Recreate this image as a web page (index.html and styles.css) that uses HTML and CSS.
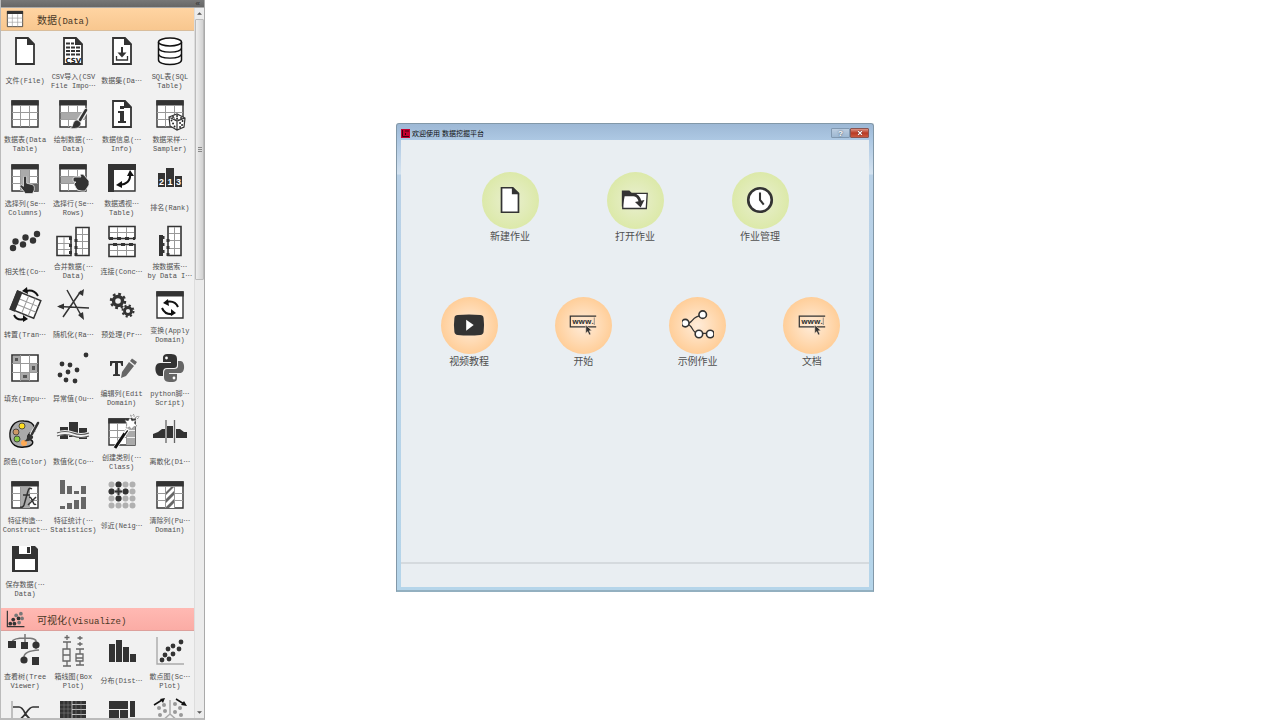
FILE: index.html
```html
<!DOCTYPE html>
<html lang="zh-CN">
<head>
<meta charset="utf-8">
<title>数据挖掘平台</title>
<link rel="stylesheet" href="styles.css">
</head>
<body>
<svg class="defs" aria-hidden="true">
  <defs>
    <symbol id="table" viewBox="0 0 34 34"><path fill="#fff" stroke="#333" stroke-width="1.4" d="M4 4h26v26H4z"/><path stroke="#999" d="M12.500 9v21M21.500 9v21M4 15.500h26M4 22.500h26"/><path fill="#333" d="M3.300 3.300h27.400v5.200H3.300z"/></symbol>
    <symbol id="page" viewBox="0 0 34 34"><path fill="#fff" stroke="#333" stroke-width="1.800" d="M8 4h12l6 6v20H8z"/><path fill="#333" d="M19 3l8 8h-8z"/></symbol>
    <symbol id="frame" viewBox="0 0 34 34"><path fill="#fff" stroke="#333" stroke-width="1.400" d="M4 4h26v26H4z"/><path fill="#333" d="M3.300 3.300h27.400v5.200H3.300z"/></symbol>
    <symbol id="hand" viewBox="0 0 20 20"><path fill="#333" stroke="#f1f1f1" stroke-width=".8" d="M5 2q0-2 1.700-2t1.800 2v6l6 1.500q2.500.5 2.500 3v3l-2 4H7l-2-3-4-5q0-2 2-1.500l2 1.500z"/></symbol>
    <symbol id="www" viewBox="0 0 34 34"><path fill="none" stroke="#333" stroke-width="1.300" d="M31 7.500H3.500v11.500H31"/><path stroke="#777" stroke-width=".8" d="M29 9v8"/><text x="5.500" y="16" class="www-text">www.</text><path fill="#333" stroke="#ffe3c6" stroke-width=".6" d="M20 17l6.500 6-2.800.2 1.700 3.600-1.800.9-1.700-3.700-2 2z"/></symbol>
  </defs>
</svg>

<aside class="palette">
  <div class="palette-bar"><button class="collapse" aria-label="收起">«</button></div>
  <div class="palette-main">
    <div class="sections">
      <section>
        <h2 class="head data"><svg class="head-icon"><use href="#table"/></svg><span>数据<small>(Data)</small></span></h2>
        <div class="grid">
          <button class="item"><svg><use href="#page"/></svg><span>文件(File)</span></button>
          <button class="item"><svg viewBox="0 0 34 34"><use href="#page"/><path stroke="#333" stroke-width="2" stroke-dasharray="4 1" d="M10 9.500h8M10 13.500h14M10 17h14M10 20.500h14"/><text x="9.500" y="28.500" class="csv-text">CSV</text></svg><span>CSV导入(CSV<br>File Impo⋯</span></button>
          <button class="item"><svg viewBox="0 0 34 34"><use href="#page"/><path fill="none" stroke="#333" stroke-width="2" d="M17 13v8"/><path fill="#333" d="M12.500 18.500h9L17 23.500z"/><path fill="none" stroke="#333" stroke-width="1.300" d="M11.500 22v4h11v-4"/></svg><span>数据集(Da⋯</span></button>
          <button class="item"><svg viewBox="0 0 34 34"><path fill="#fff" stroke="#111" stroke-width="1.500" d="M5.500 8v18c0 6 23 6 23 0V8"/><ellipse cx="17" cy="8" rx="11.500" ry="4" fill="#fff" stroke="#111" stroke-width="1.500"/><path fill="none" stroke="#111" stroke-width="1.300" d="M5.500 14c0 5.500 23 5.500 23 0M5.500 20c0 5.500 23 5.500 23 0"/></svg><span>SQL表(SQL<br>Table)</span></button>

          <button class="item"><svg><use href="#table"/></svg><span>数据表(Data<br>Table)</span></button>
          <button class="item"><svg viewBox="0 0 34 34"><use href="#table"/><path fill="#aaa" d="M5 15.500h24v7H5z"/><path stroke="#f1f1f1" stroke-width="5" d="M31 12l-8 12"/><path stroke="#333" stroke-width="2.600" stroke-linecap="round" d="M30 13l-6 10"/><path fill="#333" stroke="#f1f1f1" stroke-width=".6" d="M21 23q4 1 4 4-2 6-11 4 3-1 3-4 1-4 4-4z"/></svg><span>绘制数据(⋯<br>Data)</span></button>
          <button class="item"><svg viewBox="0 0 34 34"><use href="#page"/><path fill="#333" d="M15 9h4v3h-4zM13 14h6v10h2v2h-8v-2h2v-8h-2z"/></svg><span>数据信息(⋯<br>Info)</span></button>
          <button class="item"><svg viewBox="0 0 34 34"><use href="#table"/><path fill="#fff" stroke="#333" stroke-width="1.200" d="M16 20l8-3 8 4-1 9-7 3-7-4zM16 20l8 4 8-3M24 24v9"/><path stroke="#222" stroke-width="1.800" stroke-linecap="round" d="M20 20h.1M24 19h.1M28 21h.1M24 21.500h.1M18.500 23.500h.1M21.500 29.500h.1M20 26.500h.1M27 26h.1M29 28h.1M27 30h.1M29.500 24h.1"/></svg><span>数据采样⋯<br>Sampler)</span></button>

          <button class="item"><svg viewBox="0 0 34 34"><use href="#table"/><path fill="#aaa" d="M13 9h8v21h-8z"/><path fill="#666" d="M23 23h7v7h-7z"/><use href="#hand" x="11" y="15" width="18" height="18"/></svg><span>选择列(Se⋯<br>Columns)</span></button>
          <button class="item"><svg viewBox="0 0 34 34"><use href="#table"/><path fill="#aaa" d="M5 16h24v6H5z"/><path fill="#333" stroke="#f1f1f1" stroke-width=".8" d="M17 18q0-2 2-2h6l-1-2q2-2 4 0l5 6v4l-4 6h-3q-5 0-6-3l-2-4 2-2h-2q-1-1-1-3z"/></svg><span>选择行(Se⋯<br>Rows)</span></button>
          <button class="item"><svg viewBox="0 0 34 34"><path fill="#fff" stroke="#333" stroke-width="1.400" d="M4 4h26v26H4z"/><path fill="#333" d="M3 3h28v6H9v22H3z"/><path fill="none" stroke="#111" stroke-width="2" d="M25 13q1 10-11 11"/><path fill="#111" d="M25 9l4 6h-7zM11 24l6-4v7z"/></svg><span>数据透视⋯<br>Table)</span></button>
          <button class="item"><svg viewBox="0 0 34 34"><path fill="#333" d="M5 12h7v14H5zM13 7h8v19h-8zM22 15h7v11h-7z"/><text x="6" y="24" class="rank-text">2</text><text x="14.500" y="24" class="rank-text">1</text><text x="23" y="24" class="rank-text">3</text></svg><span>排名(Rank)</span></button>

          <button class="item"><svg viewBox="0 0 34 34"><g fill="#333"><circle cx="5" cy="24" r="3.200"/><circle cx="7.500" cy="17.500" r="3.200"/><circle cx="15" cy="20.500" r="3.200"/><circle cx="17.500" cy="13.500" r="3.200"/><circle cx="25" cy="16.500" r="3.200"/><circle cx="29" cy="10" r="3.200"/></g></svg><span>相关性(Co⋯</span></button>
          <button class="item"><svg viewBox="0 0 34 34"><path fill="#fff" stroke="#333" stroke-width="1.600" d="M1 12.500h14v19H1zM20 3.500h13v28H20z"/><path stroke="#999" d="M8 13v18M2 19.500h12M2 25.500h12M26.500 4v27M21 10.500h11M21 17.500h11M21 24.500h11"/><path stroke="#333" stroke-width="3" stroke-dasharray="3 4" d="M14.500 13v18M20 15v17"/></svg><span>合并数据(⋯<br>Data)</span></button>
          <button class="item"><svg viewBox="0 0 34 34"><path fill="#fff" stroke="#333" stroke-width="1.600" d="M4 2.500h26v12H4zM4 20.500h26v12H4z"/><path stroke="#999" d="M12.500 3v11M21.500 3v11M5 8.500h24M12.500 21v11M21.500 21v11M5 26.500h24"/><path stroke="#333" stroke-width="3" stroke-dasharray="4 4" d="M4 14.500h26M8 20.500h22"/></svg><span>连接(Conc⋯</span></button>
          <button class="item"><svg viewBox="0 0 34 34"><path fill="#fff" stroke="#333" stroke-width="1.600" d="M15 2.500h13v29H15z"/><path stroke="#999" d="M21.500 3v28M16 9.500h11M16 16.500h11M16 24.500h11"/><path fill="#333" d="M6 11h4v21H6z"/><path stroke="#333" stroke-width="3" stroke-dasharray="3 4" d="M10 12v20M15 15v17"/></svg><span>按数据索⋯<br>by Data I⋯</span></button>

          <button class="item"><svg viewBox="0 0 34 34"><g transform="rotate(22 17 17)"><path fill="#fff" stroke="#333" stroke-width="1.500" d="M5 7h25v19H5z"/><path stroke="#999" d="M17 7v19M24 7v19M9 13.500h21M9 19.500h21"/><path fill="#333" d="M4 6h6v21H4z"/></g><path fill="none" stroke="#111" stroke-width="2" d="M18 3q8-2 12 5M16 31Q9 33 6 27"/><path fill="#111" d="M14 3l5-4 1 7zM20 31l-5-4v7z"/></svg><span>转置(Tran⋯</span></button>
          <button class="item"><svg viewBox="0 0 34 34"><path stroke="#333" stroke-width="1.500" d="M11 2l15 27M7 29L25 3M33 20L3 18.500"/><path fill="#333" d="M28 1l-1 7-5-3zM28 32l-6-5 5-3zM1 18.500l7-3v6z"/></svg><span>随机化(Ra⋯</span></button>
          <button class="item"><svg viewBox="0 0 34 34"><g fill="none" stroke="#333"><circle cx="13" cy="13" r="4.500" stroke-width="3.400"/><circle cx="13" cy="13" r="7" stroke-width="2.500" stroke-dasharray="2.750 2.750"/><circle cx="23" cy="23" r="3.500" stroke-width="2.800"/><circle cx="23" cy="23" r="5.500" stroke-width="2" stroke-dasharray="2.160 2.160"/></g></svg><span>预处理(Pr⋯</span></button>
          <button class="item"><svg viewBox="0 0 34 34"><use href="#frame"/><path fill="none" stroke="#111" stroke-width="2" d="M13 14q9-2 12 5M9 20q3 7 11 6"/><path fill="#111" d="M10 15l5-4 1 7zM23 25l-5-4v7z"/></svg><span>变换(Apply<br>Domain)</span></button>

          <button class="item"><svg viewBox="0 0 34 34"><path fill="#fff" stroke="#333" stroke-width="1.600" d="M4 4h26v26H4z"/><path stroke="#999" d="M12.500 4v26M21.500 4v26M4 12.500h26M4 21.500h26"/><path fill="#555" stroke="#aaa" stroke-width="2" d="M6 6h5v5H6zM23 14h5v6h-5zM14 23h6v5h-6z"/></svg><span>填充(Impu⋯</span></button>
          <button class="item"><svg viewBox="0 0 34 34"><g fill="#333"><circle cx="30" cy="4" r="2.400"/><circle cx="6" cy="13" r="2.400"/><circle cx="14" cy="14" r="2.400"/><circle cx="21" cy="19" r="2.400"/><circle cx="12" cy="21" r="2.400"/><circle cx="4" cy="24" r="2.400"/><circle cx="10" cy="29" r="2.400"/><circle cx="19" cy="30" r="2.400"/></g></svg><span>异常值(Ou⋯</span></button>
          <button class="item"><svg viewBox="0 0 34 34"><path fill="#333" d="M5 10h13v5h-1.500l-1-3H13v11l2 .5V25H8v-1.500l2-.5V12H7.500l-1 3H5z"/><path fill="#666" d="M24 11l5 4-8 10-5 2 1-6zM25 10l2-2.500 5 3.500-2 3z"/></svg><span>编辑列(Edit<br>Domain)</span></button>
          <button class="item"><svg viewBox="0 0 34 34"><path fill="#333" d="M16 3c-6 0-6 2-6 5v3h8v1H7c-7 0-5 13 0 13h3v-4q0-4 4-4h7q3 0 3-3V8c0-4-2-5-8-5z"/><path fill="#666" d="M18 31c6 0 6-2 6-5v-3h-8v-1h11c6 0 5-13 0-12h-2v5q0 3-4 3h-7q-3 0-3 4v4c0 4 2 5 7 5z"/><circle cx="13.500" cy="7" r="1.400" fill="#fff"/><circle cx="21" cy="27" r="1.400" fill="#fff"/></svg><span>python脚⋯<br>Script)</span></button>

          <button class="item"><svg viewBox="0 0 34 34"><path fill="#aaa" stroke="#111" stroke-width="1.400" d="M16 6C6 5 1 13 2 22c1 8 7 11 14 10 8 0 11-5 7-7-3-2-5-3-1-7 4-2 6-1 5-4C26 9 22 6 16 6z"/><circle cx="14" cy="11" r="3" fill="#fd2" stroke="#333" stroke-width=".8"/><circle cx="8" cy="17" r="3" fill="#c96" stroke="#333" stroke-width=".8"/><circle cx="9" cy="24" r="3" fill="#8c4" stroke="#333" stroke-width=".8"/><circle cx="16" cy="28" r="3" fill="#fa5"/><path stroke="#f1f1f1" stroke-width="4" d="M30 9l-7 11"/><path stroke="#333" stroke-width="2.600" stroke-linecap="round" d="M30 8l-6 11"/><path fill="#333" d="M21 19q5 1 4 4-3 4-9 3 3-1 3-4z"/></svg><span>颜色(Color)</span></button>
          <button class="item"><svg viewBox="0 0 34 34"><path fill="#333" d="M4 12h8v12H4zM13 7h9v15h-9zM23 13h8v11h-8z"/><path fill="none" stroke="#f1f1f1" stroke-width="5" d="M1 19q8-3 16 0t16 0"/><path fill="none" stroke="#555" stroke-width="1.200" d="M1 18q8-3 16 0t16 0M1 21q8-3 16 0t16 0"/></svg><span>数值化(Co⋯</span></button>
          <button class="item"><svg viewBox="0 0 34 34"><use href="#table"/><path fill="#aaa" d="M22 9h8v21h-8z"/><path stroke="#f1f1f1" d="M22 15.500h8M22 22.500h8"/><path stroke="#fff" stroke-width="4" d="M10 33l13-19"/><path stroke="#111" stroke-width="3" d="M10 33l12-18"/><path stroke="#fff" stroke-width="1.500" d="M19 18l3-4"/><path fill="#fff" stroke="#888" stroke-width=".8" stroke-dasharray="2 1" d="M20 5l3 1 2-3 2 3 4-1-2 3 3 3-4 1-1 3-2-3-4 1 1-4zM25 0l2 1 2-2v3l2 1-3 1zM31 2l3-1-1 3z"/></svg><span>创建类别(⋯<br>Class)</span></button>
          <button class="item"><svg viewBox="0 0 34 34"><path fill="#333" d="M0 19l5-2 4-3h3v9H0zM14 11h6v12h-6zM23 14h4l4 3h3v6H23z"/><path stroke="#666" stroke-width="1.300" d="M13 5v23M21.500 5v23"/></svg><span>离散化(Di⋯</span></button>

          <button class="item"><svg viewBox="0 0 34 34"><use href="#table"/><path fill="#aaa" d="M13 9h9v21h-9z"/><path fill="none" stroke="#333" stroke-width="1.500" d="M24 11q-3-2-4 2l-4 14q-1 3-4 2M15 17h7M21 19q2 0 3 3l2 4q1 1 2 0M28 19l-8 8"/></svg><span>特征构造⋯<br>Construct⋯</span></button>
          <button class="item"><svg viewBox="0 0 34 34"><path fill="#666" d="M4 2h5v14H4zM11 8h5v8h-5zM18 13h5v3h-5zM25 8h5v8h-5zM4 28h5v3H4zM11 25h5v6h-5zM18 22h5v9h-5zM25 19h5v12h-5z"/></svg><span>特征统计(⋯<br>Statistics)</span></button>
          <button class="item"><svg viewBox="0 0 34 34"><path stroke="#b0b0b0" stroke-width="6" stroke-linecap="round" stroke-dasharray="0 7" d="M6.500 6.500h22M6.500 13.500h22M6.500 20.500h22M6.500 27.500h22"/><path stroke="#333" stroke-width="6" stroke-linecap="round" d="M13.500 6.500h.1M6.500 13.500h.1M20.500 13.500h.1M13.500 20.500h.1"/><path stroke="#333" stroke-width="2" d="M13.500 10v7M10 13.500h7"/></svg><span>邻近(Neig⋯</span></button>
          <button class="item"><svg viewBox="0 0 34 34"><use href="#table"/><path fill="#fff" d="M13 9h8v21h-8z"/><path fill="#666" d="M13 14l5-5h3l-8 8zM13 21l8-8v4l-8 8zM13 29l8-8v4l-5 5h-3z"/></svg><span>清除列(Pu⋯<br>Domain)</span></button>

          <button class="item"><svg viewBox="0 0 34 34"><path fill="#333" d="M4 4h23l3 3v23H4z"/><path fill="#fff" d="M11 4h12v8H11zM7 17h20v11H7z"/><path fill="#333" d="M19 5h3v6h-3z"/></svg><span>保存数据(⋯<br>Data)</span></button>
        </div>
      </section>
      <section>
        <h2 class="head visual"><svg class="head-icon" viewBox="0 0 34 34"><path fill="none" stroke="#333" stroke-width="2" d="M4 3v27h29"/><g fill="#333"><circle cx="9" cy="25" r="3.200"/><circle cx="16" cy="25" r="3.200"/><circle cx="14" cy="18" r="3.200"/><circle cx="23" cy="16" r="3.200"/></g><g fill="#777"><circle cx="19" cy="11" r="3.200"/><circle cx="24" cy="23" r="3.200"/><circle cx="29" cy="16" r="3.200"/><circle cx="27" cy="8" r="3.200"/></g></svg><span>可视化<small>(Visualize)</small></span></h2>
        <div class="grid">
          <button class="item"><svg viewBox="0 0 34 34"><path fill="none" stroke="#777" stroke-width="1.500" d="M4 8q1-4 13-4t11 4M17 0v10M28 8v7M16 23q0-6 15-7"/><g fill="#333"><path d="M0 7h8v7H0zM13 8h7v7h-7zM24 23h7v8h-7z"/><circle cx="28" cy="11" r="3.600"/><circle cx="16" cy="26" r="3.600"/></g></svg><span>查看树(Tree<br>Viewer)</span></button>
          <button class="item"><svg viewBox="0 0 34 34"><path fill="none" stroke="#666" stroke-width="1.300" d="M11 1v5M8.500 3.500h5M24 2v4M21.500 4h5M24 8v4M21.500 10h5M11 8v7M7 8h8M7 15h7v12H7zM7 21h7M11 27v5M7 32h8M24 15v5M20 15h8M20 20h7v7h-7zM20 24h7M24 27v4M20 31h8"/></svg><span>箱线图(Box<br>Plot)</span></button>
          <button class="item"><svg viewBox="0 0 34 34"><path fill="#333" d="M4 10h6v18H4zM11 6h6v22h-6zM18 13h6v15h-6zM25 20h6v8h-6z"/></svg><span>分布(Dist⋯</span></button>
          <button class="item"><svg viewBox="0 0 34 34"><path fill="none" stroke="#aaa" stroke-width="1.400" d="M4 3v27h27"/><g fill="#333"><circle cx="9" cy="26" r="2.400"/><circle cx="16" cy="25" r="2.400"/><circle cx="12" cy="21" r="2.400"/><circle cx="20" cy="20" r="2.400"/><circle cx="15" cy="15" r="2.400"/><circle cx="26" cy="15" r="2.400"/><circle cx="20" cy="12" r="2.400"/><circle cx="28" cy="8" r="2.400"/></g></svg><span>散点图(Sc⋯<br>Plot)</span></button>
          <button class="item" aria-label="折线图"><svg viewBox="0 0 34 34"><path stroke="#aaa" stroke-width="1.400" d="M4 4v27"/><path fill="none" stroke="#333" stroke-width="1.700" d="M5 10h6q3 0 6 6t14 12M31 10h-6q-3 0-7 6T4 28"/></svg></button>
          <button class="item" aria-label="热图"><svg viewBox="0 0 34 34"><path fill="#333" d="M4 4h26v26H4z"/><path stroke="#ddd" stroke-width=".8" d="M16 7.500h14M16 12.500h14M16 17.500h14M16 4v26"/><path stroke="#888" stroke-width=".5" d="M8 4v26M12 4v26M20 4v26M25 4v26M4 8h12M4 12h12M4 16h12"/></svg></button>
          <button class="item" aria-label="马赛克图"><svg viewBox="0 0 34 34"><path fill="#333" d="M4 4h19v8H4zM25 4h5v16h-5zM4 13h10v17H4zM15 13h8v17h-8z"/></svg></button>
          <button class="item" aria-label="投影"><svg viewBox="0 0 34 34"><path stroke="#111" stroke-width="1.500" d="M1 8l8-5M23 2l8 5"/><path fill="#111" d="M12 1l-5 1 3 4zM34 9l-6-1 3-4z"/><path stroke="#aaa" stroke-width="1.500" d="M17 3v14M17 17l-9 8M17 17l9 8"/><g fill="#999"><circle cx="11" cy="8" r="2"/><circle cx="6" cy="11" r="2"/><circle cx="12" cy="14" r="2"/><circle cx="7" cy="18" r="2"/><circle cx="22" cy="7" r="2"/><circle cx="27" cy="11" r="2"/><circle cx="22" cy="15" r="2"/><circle cx="28" cy="18" r="2"/></g></svg></button>
        </div>
      </section>
    </div>
    <div class="scroll">
      <button class="arrow" aria-label="向上滚动"><svg viewBox="0 0 6 6"><path fill="#555" d="M0 4.500l3-3 3 3z"/></svg></button>
      <div class="track"><div class="thumb"><i></i></div></div>
      <button class="arrow" aria-label="向下滚动"><svg viewBox="0 0 6 6"><path fill="#555" d="M0 1.500l3 3 3-3z"/></svg></button>
    </div>
  </div>
</aside>

<main class="stage">
  <div class="dialog" role="dialog" aria-labelledby="dialog-title">
    <header class="titlebar">
      <svg class="logo" viewBox="0 0 9 9"><path fill="#c4002f" d="M0 0h9v9H0z"/><path fill="none" stroke="#3a0010" d="M1.500 1v6.500H8M4 2h4M4.500 4v2"/></svg>
      <h1 id="dialog-title">欢迎使用 数据挖掘平台</h1>
      <button class="help" aria-label="帮助">?</button>
      <button class="close" aria-label="关闭"><svg viewBox="0 0 8 8"><path stroke="#7a2a20" stroke-width="3" d="M1.500 1.500l5 5M6.500 1.500l-5 5"/><path stroke="#fff" stroke-width="1.800" d="M1.500 1.500l5 5M6.500 1.500l-5 5"/></svg></button>
    </header>
    <div class="content">
      <div class="row three">
        <button class="action green"><span class="disc"><svg><use href="#page"/></svg></span>新建作业</button>
        <button class="action green"><span class="disc"><svg viewBox="0 0 34 34"><path fill="#fff" stroke="#333" stroke-width="1.400" d="M4 10h26l-1 16H4z"/><path fill="#333" d="M3 7h8l3 3h4v3H6L4 24H3z"/><path fill="none" stroke="#333" stroke-width="3" d="M15 11q6 1 7.500 8"/><path fill="#333" d="M17 19l10-2-4 8z"/></svg></span>打开作业</button>
        <button class="action green"><span class="disc"><svg viewBox="0 0 34 34"><circle cx="17" cy="17" r="12.500" fill="#fff" stroke="#333" stroke-width="2.800"/><path fill="none" stroke="#333" stroke-width="2.200" d="M17 9v8l4 5"/></svg></span>作业管理</button>
      </div>
      <div class="row four">
        <button class="action orange"><span class="disc"><svg viewBox="0 0 34 34"><path fill="#333" d="M5 6.500q12-1.500 24 0 3 0 3.500 3 1 7.500 0 15-.5 3-3.500 3-12 1.500-24 0-3 0-3.500-3-1-7.500 0-15 .5-3 3.500-3z"/><path fill="#fff" d="M14 11.500l8 5.500-8 6z"/></svg></span>视频教程</button>
        <button class="action orange"><span class="disc"><svg><use href="#www"/></svg></span>开始</button>
        <button class="action orange"><span class="disc"><svg viewBox="0 0 34 34"><path fill="none" stroke="#333" stroke-width="1.300" d="M4 16c8 0 6-9 17-9M4 16c9 0 5 10 14 10h11"/><g fill="#fff" stroke="#333" stroke-width="1.700"><circle cx="3.500" cy="15" r="4"/><circle cx="22" cy="6" r="4"/><circle cx="18" cy="26.500" r="4"/><circle cx="30" cy="26.500" r="4"/></g></svg></span>示例作业</button>
        <button class="action orange"><span class="disc"><svg><use href="#www"/></svg></span>文档</button>
      </div>
    </div>
    <footer class="footer"></footer>
  </div>
</main>
</body>
</html>
```
FILE: styles.css
```css
* { box-sizing: border-box; }
body {
  margin: 0;
  height: 100vh;
  overflow: hidden;
  background: #fff;
  color: #505050;
  font-family: "Liberation Mono", "Noto Sans CJK SC", monospace;
}
button { border: 0; padding: 0; background: none; color: inherit; font: inherit; }
.defs { position: absolute; width: 0; height: 0; }

.palette {
  display: flex;
  flex-direction: column;
  width: 205px;
  height: 100vh;
  background: #f1f1f1;
  border-right: 1px solid #aaa;
  border-left: 1px solid #bbb;
  border-bottom: 2px solid #bbb;
}
.palette-bar {
  flex: none;
  display: flex;
  align-items: center;
  justify-content: flex-end;
  height: 8px;
  padding-right: 4px;
  background: linear-gradient(#777, #666);
  border-bottom: 1px solid #aaa;
}
.collapse { color: #333; font-size: 8px; line-height: 6px; }
.palette-main { flex: 1; display: flex; min-height: 0; }
.sections { flex: 1; overflow: hidden; }

.head {
  display: flex;
  align-items: center;
  gap: 12px;
  height: 23px;
  margin: 0;
  padding-left: 4px;
  font-size: 10px;
  font-weight: 400;
  color: #4a3826;
  border-bottom: 1px solid #d8bd9c;
}
.head small { font-size: 9px; }
.head-icon { width: 20px; height: 20px; }
.data { background: linear-gradient(#ffd4a2, #f8c78f); }
.visual { background: linear-gradient(#ffb9b3, #fbaca5); border-color: #dda09c; }

.grid {
  display: grid;
  grid-template-columns: repeat(4, 1fr);
  grid-auto-rows: 63px 64px;
  padding-bottom: 6px;
}
.item {
  display: flex;
  flex-direction: column;
  align-items: center;
  min-width: 0;
  padding-top: 3px;
  font-size: 7px;
  line-height: 9px;
  white-space: nowrap;
}
.item svg { flex: none; width: 34px; height: 34px; overflow: visible; }
.item > span {
  display: flow-root;
  margin: auto 0;
  padding-top: 1px;
}
.csv-text { font: 700 7px "DejaVu Sans", sans-serif; fill: #222; }
.rank-text { font: 700 9px "Liberation Sans", sans-serif; fill: #fff; }
.www-text { font: 700 8px "Open Sans", sans-serif; fill: #333; }

.scroll {
  display: flex;
  flex-direction: column;
  width: 10px;
  border-left: 1px solid #ddd;
  background: #ececec;
}
.arrow { display: flex; align-items: center; justify-content: center; height: 11px; }
.arrow svg { width: 5px; height: 5px; }
.track { flex: 1; }
.thumb {
  display: flex;
  align-items: center;
  justify-content: center;
  height: 38%;
  border: 1px solid #bbb;
  border-radius: 1px;
  background: linear-gradient(90deg, #eee, #d2d2d2);
}
.thumb i { width: 4px; height: 5px; background: repeating-linear-gradient(#888 0 1px, #ddd 1px 2px); }

.stage {
  position: absolute;
  inset: 0;
  display: flex;
  align-items: center;
  justify-content: center;
  padding: 0 0 6px 1px;
  pointer-events: none;
}
.dialog {
  width: 478px;
  padding: 0 4px 3px;
  border: 1px solid #8298a8;
  border-bottom: 2px solid #93b0c0;
  border-radius: 3px 3px 0 0;
  background: linear-gradient(#9db8d5, #adc8e3 16px, #d5e3f0 50px, #b9d1e7 51px, #b5d5ea);
  pointer-events: auto;
}
.titlebar { display: flex; align-items: center; height: 16px; padding-top: 3px; gap: 2px; }
.logo { width: 9px; height: 9px; }
.titlebar h1 {
  flex: 1;
  margin: 0;
  color: #111;
  font: 400 7px "Liberation Sans", "Noto Sans CJK SC", sans-serif;
}
.help, .close {
  display: flex;
  align-items: center;
  justify-content: center;
  width: 19px;
  height: 10px;
  border: 1px solid #8198b0;
  border-radius: 1px;
  font: 700 8px "Liberation Sans", sans-serif;
}
.help { margin-right: -2px; color: #fff; background: linear-gradient(#bccde0, #9eb8d2); text-shadow: 0 0 2px #234; }
.close { border-color: #8a5450; background: linear-gradient(#dc9486, #b93a24 50%, #cb5a40); }
.close svg { width: 6px; height: 6px; }

.content {
  min-height: 424px;
  padding-top: 32px;
  background: #e9eef2;
  border-bottom: 2px solid #d5dade;
}
.row { display: grid; height: 125px; align-items: start; }
.three { grid-template-columns: repeat(3, 125px); justify-content: center; }
.four { grid-template-columns: repeat(4, 1fr); padding-left: 11px; }
.action {
  display: flex;
  flex-direction: column;
  align-items: center;
  font-size: 10px;
  line-height: 14px;
}
.disc {
  display: grid;
  place-items: center;
  width: 57px;
  height: 57px;
  margin-bottom: 2px;
  border-radius: 50%;
}
.disc svg { width: 32px; height: 32px; }
.green .disc { background: radial-gradient(closest-side, #e9efd0, #dce9a9); }
.orange .disc { background: radial-gradient(closest-side, #ffecd9, #ffce99); }
.footer { height: 23px; background: #e9eef2; }
```
